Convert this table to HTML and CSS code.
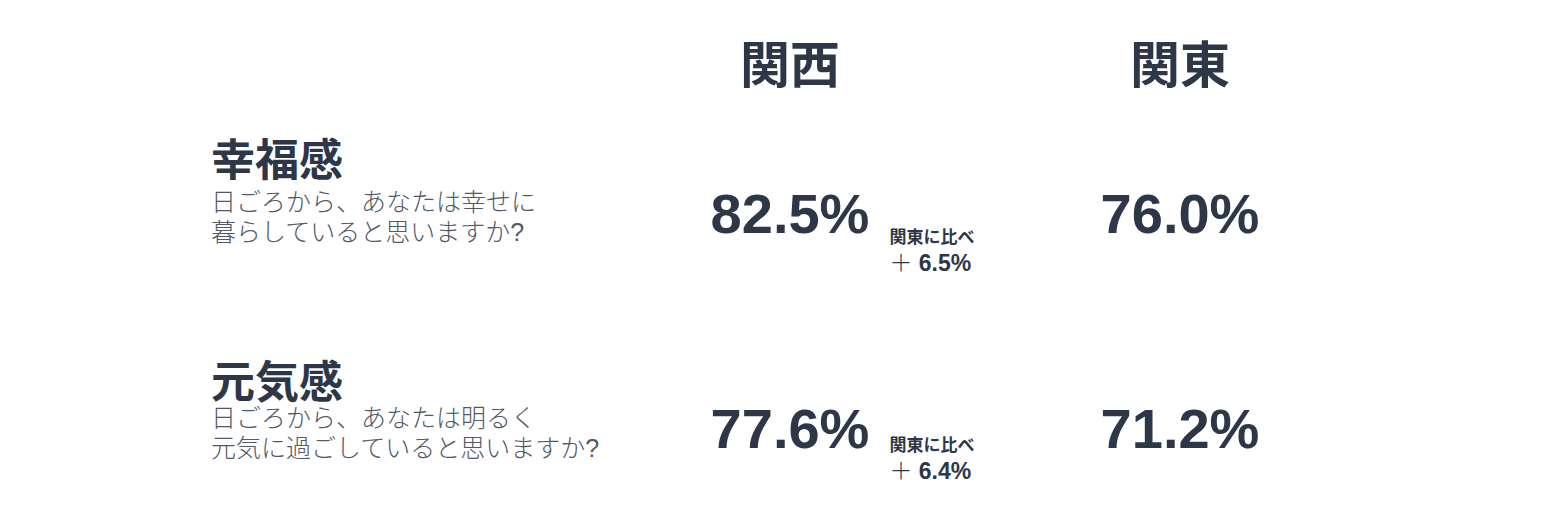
FILE: index.html
```html
<!DOCTYPE html>
<html lang="ja">
<head>
<meta charset="utf-8">
<link rel="stylesheet" href="styles.css">
</head>
<body>
<section class="compare">
  <div class="head-row">
    <div class="cell"></div>
    <div class="cell region">関西</div>
    <div class="cell region">関東</div>
  </div>
  <div class="row">
    <div class="label">
      <h2 class="title">幸福感</h2>
      <p class="question">日ごろから、あなたは幸せに<br>暮らしていると思いますか?</p>
    </div>
    <div class="value-cell">
      <span class="value">82.5%</span>
      <div class="diff">
        <span class="diff-label">関東に比べ</span>
        <span class="diff-num"><span class="plus">＋</span> 6.5%</span>
      </div>
    </div>
    <div class="value-cell">
      <span class="value">76.0%</span>
    </div>
  </div>
  <div class="row row-second">
    <div class="label">
      <h2 class="title">元気感</h2>
      <p class="question">日ごろから、あなたは明るく<br>元気に過ごしていると思いますか?</p>
    </div>
    <div class="value-cell">
      <span class="value">77.6%</span>
      <div class="diff">
        <span class="diff-label">関東に比べ</span>
        <span class="diff-num"><span class="plus">＋</span> 6.4%</span>
      </div>
    </div>
    <div class="value-cell">
      <span class="value">71.2%</span>
    </div>
  </div>
</section>
</body>
</html>
```
FILE: styles.css
```css
html, body {
  margin: 0;
  padding: 0;
  background: #ffffff;
}
body {
  font-family: "Liberation Sans", "Noto Sans CJK JP", sans-serif;
  color: #2d3748;
}
.compare {
  padding: 41px 0 0 211px;
}
.head-row,
.row {
  display: grid;
  grid-template-columns: 384px 390px 390px;
}
.region {
  font-size: 50px;
  font-weight: 700;
  line-height: 1;
  text-align: center;
}
.row {
  margin-top: 48px;
  height: 160px;
}
.row-second {
  margin-top: 62px;
}
.title {
  margin: 0;
  font-size: 44px;
  font-weight: 700;
  line-height: 1;
}
.question {
  margin: 4px 0 0;
  font-size: 25px;
  font-weight: 300;
  line-height: 30px;
  color: #525a67;
  white-space: nowrap;
}
.row-second .question {
  margin-top: -2px;
}
.value-cell {
  display: grid;
  grid-template-columns: 1fr auto 1fr;
  align-items: start;
  padding-top: 47px;
}
.row-second .value-cell {
  padding-top: 40px;
}
.value {
  grid-column: 2;
  font-size: 56px;
  font-weight: 700;
  line-height: 1;
}
.diff {
  grid-column: 3;
  display: flex;
  flex-direction: column;
  padding: 41px 0 0 20px;
}
.row-second .diff {
  padding-top: 34px;
}
.diff-label {
  font-size: 17px;
  font-weight: 700;
  line-height: 22px;
}
.diff-num {
  font-size: 23px;
  font-weight: 700;
  line-height: 28px;
}
.plus {
  font-weight: 300;
}
```
